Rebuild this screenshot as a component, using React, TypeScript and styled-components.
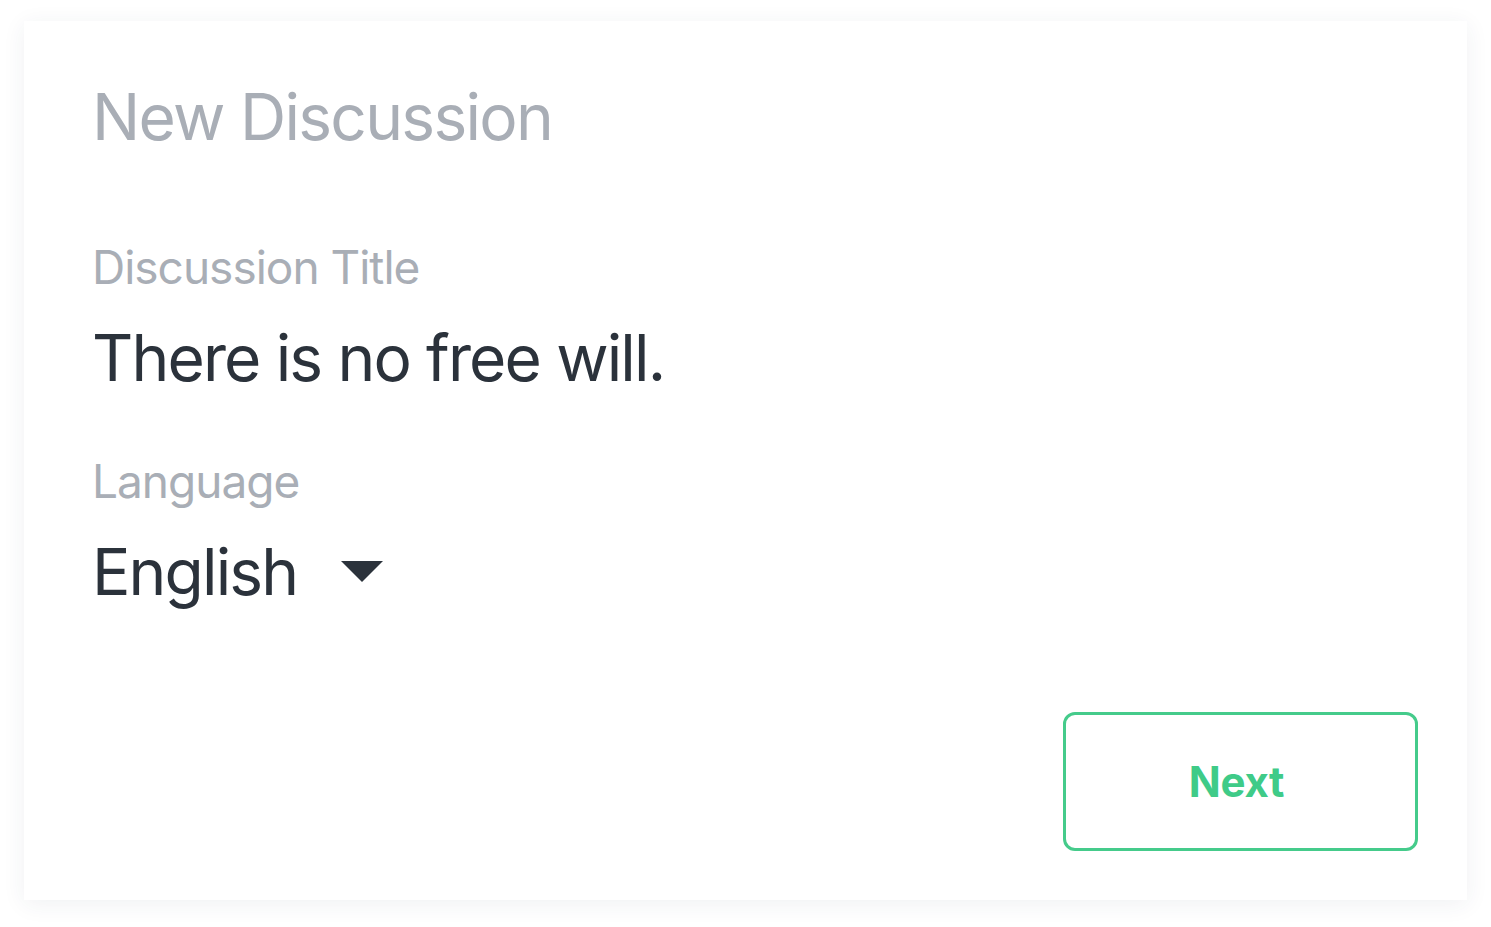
import React from "react";
import styled, { createGlobalStyle } from "styled-components";

const Global = createGlobalStyle`
  html, body { margin: 0; padding: 0; background: #ffffff; }
  body { font-family: Inter, "Noto Sans", sans-serif; }
  * { box-sizing: border-box; }
`;

const Page = styled.div`
  padding: 21px 24px 27px 24px;
`;

const Card = styled.div`
  height: 879px;
  background: #ffffff;
  box-shadow: 0 4px 22px rgba(40, 55, 80, 0.07);
  padding: 57px 49px 49px 68px;
  display: flex;
  flex-direction: column;
`;

const Heading = styled.h1`
  margin: 0;
  font-size: 64px;
  line-height: 77px;
  font-weight: 400;
  color: #a9aeb6;
  letter-spacing: -1.7px;
`;

const Field = styled.div<{ $top: number }>`
  margin-top: ${(p) => p.$top}px;
  display: flex;
  flex-direction: column;
`;

const Label = styled.div`
  font-size: 46px;
  line-height: 56px;
  color: #a9aeb6;
  letter-spacing: -1px;
`;

const Value = styled.div`
  margin-top: 24px;
  font-size: 64px;
  line-height: 77px;
  color: #2b323b;
  letter-spacing: -1.85px;
  display: flex;
  align-items: center;
`;

const Caret = styled.span`
  margin-left: 44px;
  width: 0;
  height: 0;
  border-left: 21px solid transparent;
  border-right: 21px solid transparent;
  border-top: 21px solid #2b323b;
`;

const Footer = styled.div`
  margin-top: auto;
  display: flex;
  justify-content: flex-end;
`;

const NextButton = styled.button`
  width: 355px;
  height: 139px;
  padding: 0 8px 0 0;
  border: 3px solid #45cb8b;
  border-radius: 12px;
  background: #ffffff;
  color: #3fcb88;
  font-family: Inter, "Noto Sans", sans-serif;
  font-size: 42px;
  font-weight: 700;
  letter-spacing: -0.3px;
  cursor: pointer;
`;

export default function App() {
  return (
    <>
      <Global />
      <Page>
        <Card>
          <Heading>New Discussion</Heading>
          <Field $top={84}>
            <Label>Discussion Title</Label>
            <Value>There is no free will.</Value>
          </Field>
          <Field $top={57}>
            <Label>Language</Label>
            <Value>
              English
              <Caret />
            </Value>
          </Field>
          <Footer>
            <NextButton>Next</NextButton>
          </Footer>
        </Card>
      </Page>
    </>
  );
}
